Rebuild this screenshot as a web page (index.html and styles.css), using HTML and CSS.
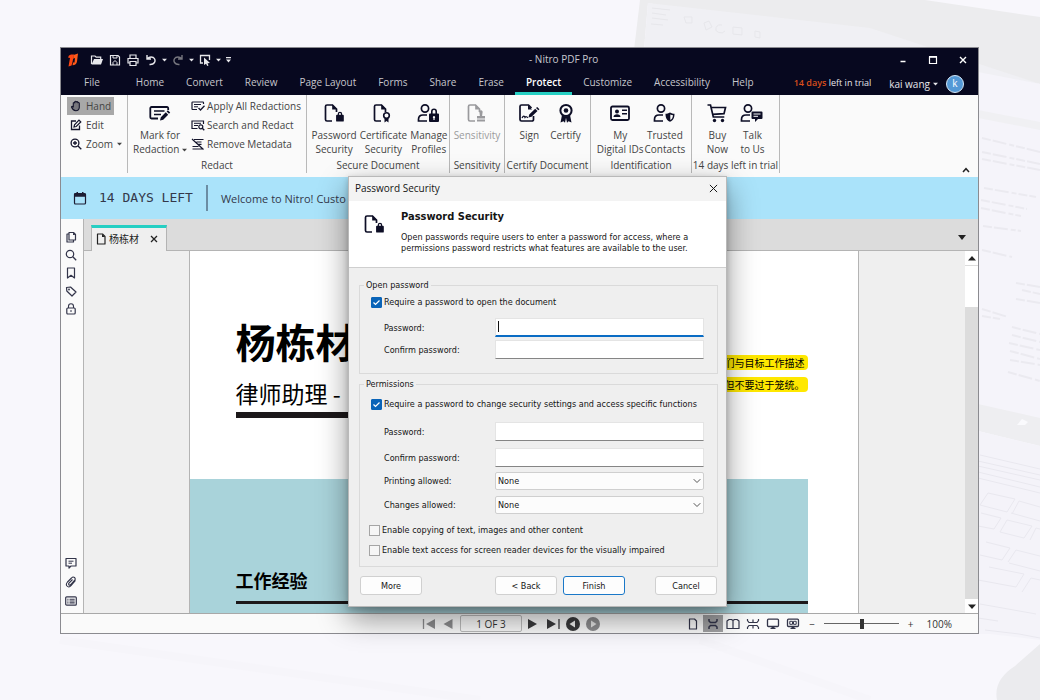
FILE: index.html
```html
<!DOCTYPE html>
<html lang="en">
<head>
<meta charset="utf-8">
<title>Nitro PDF Pro</title>
<link rel="stylesheet" href="styles.css">
</head>
<body>
<svg class="backdrop" viewBox="0 0 1040 700" preserveAspectRatio="xMaxYMid slice" aria-hidden="true">
  <path d="M640 0H925L1040 17V84L648 3L644 50H634Z" fill="#ececee"/>
  <path d="M648 3L870 28L1040 84V150L900 60L644 50Z" fill="#f0f0f4"/>
  <g fill="none" stroke="#e7e7eb"><path d="M652 8l18 2M652 13l14 2M652 18l16 2M651 24l12 1M684 17h8v6h-6zM704 23l5-2 3 6-6 3zM722 25a5 4 0 1 0 3 6M733 27l9 1v7l-9-1zM755 31l5 1v6l-5-1z"/></g>
  <path d="M978 72L1040 84V420L978 405Z" fill="#f5f4fa"/>
  <path d="M978 110L1040 122V130L978 118Z" fill="#f0f0f3"/>
  <g fill="none" stroke="#ebeaf0" stroke-width="2" stroke-dasharray="9 2 14 3 5 2"><path d="M982 138l58 14M982 152l58 12M982 159l58 11M984 188l52 9M981 200l46 9M981 208l40 8M983 226l38 5M982 250l30 7M982 309l26 8M982 316l18 3"/><path d="M1016 283l24 4M1022 290l18 4M1016 299l24 4M1012 327l28 7M1012 335l28 7M1009 343l31 7M1010 351l30 8M1010 360l30 5M1008 372l32 9"/></g>
  <path d="M978 404L1040 418V446L978 431Z" fill="#eeeef1"/>
  <path d="M1017 425l5-6 6 3-3 3z" fill="#fafafd"/>
  <path d="M978 431L1040 446V640L990 634L978 634Z" fill="#f4f3f9"/>
  <g fill="none" stroke="#e9e8ef"><path d="M980 455l60 14M978 461l62 14M978 466l62 14M978 472l62 15M978 478l62 15M980 505l8-12 27 6-8 13zM1012 514l7-13 21 6M1011 513l29 8M978 526l16 3 7-11-20-5M1000 532l7-12 25 6-8 12zM1030 540l6-12 4 1M980 555l22 5 8-12-24-6M1008 562l8-12 24 6M1009 563l31 8M978 580l38 7 8-13-35-7M1022 592l9-14 9 2M980 604l56 10M978 618l20 3M985 630l34 4 21 4"/></g>
  <path d="M997 700Q993 680 1015 666L1040 644V700Z" fill="#ebebee"/>
  <path d="M60 640L480 700M700 640L870 700" stroke="#f6f5fa" stroke-width="8"/>
</svg>

<svg class="sprite" aria-hidden="true">
  <defs>
    <g id="doc-part"><path d="M9 18H4a1.500 1.500 0 0 1-1.500-1.500v-13A1.500 1.500 0 0 1 4 2h5.500l4 4v3" fill="none" stroke="currentColor" stroke-width="1.700"/><path d="M9.200 1.500v5h5z" fill="currentColor"/></g>
    <g id="user-part" fill="none" stroke="currentColor" stroke-width="1.700"><circle cx="8" cy="5.500" r="3.600"/><path d="M10 18H1.500v-1.500c0-3 2-4.500 4.500-4.500h4"/></g>
    <symbol id="i-lockdoc" viewBox="0 0 22 20"><use href="#doc-part"/><path transform="translate(3 1.500) scale(.9)" d="M13 11.500V10.500a2.500 2.500 0 0 1 5 0v1h.8a1 1 0 0 1 1 1v5.500a1 1 0 0 1-1 1h-6.600a1 1 0 0 1-1-1V12.500a1 1 0 0 1 1-1zm1.400 0h2.200v-1a1.100 1.100 0 0 0-2.200 0z" fill="currentColor" fill-rule="evenodd"/></symbol>
    <symbol id="i-certdoc" viewBox="0 0 22 20"><use href="#doc-part"/><circle cx="14.500" cy="12.500" r="2.800" fill="none" stroke="currentColor" stroke-width="1.600"/><path d="M12.500 15h4v4.500l-2-1.500-2 1.500z" fill="currentColor"/></symbol>
    <symbol id="i-stampdoc" viewBox="0 0 22 20"><use href="#doc-part"/><path d="M13.500 9.800a1.700 1.700 0 1 1 3 0l-.4 3.200H19v2.500h-8V13h2.900zM11 16.500h8v2h-8z" fill="currentColor"/></symbol>
    <symbol id="i-sign" viewBox="0 0 22 20"><path d="M15.500 13v3.500A1.500 1.500 0 0 1 14 18H3.500A1.500 1.500 0 0 1 2 16.500v-13A1.500 1.500 0 0 1 3.500 2h7l3 3" fill="none" stroke="currentColor" stroke-width="1.700"/><path d="M10 2v4.500h4z" fill="currentColor"/><path d="M4 15c1.500-3 2.500-2 3-.5 1-1.500 2-.5 3 .3" fill="none" stroke="currentColor" stroke-width="1.200"/><path d="M10.500 14.500l.7-3 6-5.700 2.300 2.300-6 5.700zM18 5l1.200-1.100 2.300 2.300L20.300 7.300z" fill="currentColor"/></symbol>
    <symbol id="i-certify" viewBox="0 0 20 20"><circle cx="10" cy="7.500" r="5.600" fill="none" stroke="currentColor" stroke-width="2"/><circle cx="10" cy="7.500" r="2.300" fill="currentColor"/><path d="M6 12l-1.500 7.500 3-1.200 1.500 1.400 1-5 1 5 1.500-1.400 3 1.200L14 12l-4 2z" fill="currentColor"/></symbol>
    <symbol id="i-userlock" viewBox="0 0 24 20"><use href="#user-part"/><path d="M14 10.500V8.500a3 3 0 0 1 6 0v2h1a1 1 0 0 1 1 1V18a1 1 0 0 1-1 1h-8a1 1 0 0 1-1-1v-6.500a1 1 0 0 1 1-1zm1.600 0h2.800v-2a1.400 1.400 0 0 0-2.800 0zM17 13a1.200 1.200 0 0 0-.6 2.200V17h1.200v-1.800A1.200 1.200 0 0 0 17 13z" fill="currentColor" fill-rule="evenodd"/></symbol>
    <symbol id="i-usershield" viewBox="0 0 24 20"><use href="#user-part"/><path d="M17 9.500c1.500 1 3 1.300 4.500 1.300 0 4.200-1.200 6.700-4.500 8-3.300-1.300-4.500-3.800-4.500-8 1.500 0 3-.3 4.500-1.300z" fill="currentColor"/><path d="M17.300 11.500c1 .5 1.800.7 2.700.8-.2 2.300-.9 3.800-2.700 4.800z" fill="#fafafa"/></symbol>
    <symbol id="i-usertalk" viewBox="0 0 24 20"><use href="#user-part"/><path d="M12.500 8.500h9a1 1 0 0 1 1 1V15a1 1 0 0 1-1 1H18l-3 3v-3h-2.500a1 1 0 0 1-1-1V9.500a1 1 0 0 1 1-1z" fill="currentColor"/><path d="M13.500 11h7M13.500 13.300h4.500" stroke="#fafafa"/></symbol>
    <symbol id="i-idcard" viewBox="0 0 22 20"><rect x="2" y="3.500" width="18" height="13.500" rx="1.500" fill="none" stroke="currentColor" stroke-width="1.800"/><circle cx="8" cy="8.500" r="2" fill="currentColor"/><path d="M4.500 14c0-2 1.500-2.800 3.500-2.800s3.500.8 3.500 2.800zM13 6.500h5V8h-5zM13 10h5v1.500h-5z" fill="currentColor"/></symbol>
    <symbol id="i-cart" viewBox="0 0 22 20"><path d="M1.500 2h3l2.800 12h11M5.500 4.500h14L18 10.700 6.700 11.300" fill="none" stroke="currentColor" stroke-width="1.700"/><circle cx="8.500" cy="17.500" r="1.700" fill="currentColor"/><circle cx="16.500" cy="17.500" r="1.700" fill="currentColor"/></symbol>
    <symbol id="i-mark" viewBox="0 0 24 20"><path d="M10 15.500H3.500a1.200 1.200 0 0 1-1.200-1.200V5.200A1.200 1.200 0 0 1 3.500 4h15.500a1.200 1.200 0 0 1 1.200 1.200V7" fill="none" stroke="currentColor" stroke-width="1.800"/><path d="M6 8h10.500M6 11.500h7" stroke="currentColor" stroke-width="1.700"/><path d="M12 17.500l.8-3.200 5-5 2.400 2.400-5 5zM18.600 8.400l1.300-1.200 2.300 2.300L21 10.800z" fill="currentColor"/></symbol>
    <symbol id="i-apply" viewBox="0 0 14 12"><path d="M6 9.500H1.600A.7.700 0 0 1 1 8.800V2.700A.7.700 0 0 1 1.700 2h10.100a.7.700 0 0 1 .7.700V4" fill="none" stroke="currentColor" stroke-width="1.200"/><path d="M3 4.500h7M3 6.800h4" stroke="currentColor"/><path d="M7.500 8l2 2 4-4.300" fill="none" stroke="currentColor" stroke-width="1.300"/></symbol>
    <symbol id="i-searchred" viewBox="0 0 14 12"><path d="M6.500 9.500H1V2h11.500v3" fill="none" stroke="currentColor" stroke-width="1.200"/><path d="M3 4.300h7M3 6.500h4" stroke="currentColor"/><circle cx="9.800" cy="7.800" r="2" fill="none" stroke="currentColor" stroke-width="1.200"/><path d="M11.300 9.300l2 2" stroke="currentColor" stroke-width="1.300"/></symbol>
    <symbol id="i-remmeta" viewBox="0 0 14 12"><path d="M3 1.500h9.500M5.500 4h5M6.500 6.300h4M1.500 8.500h6M1.500 11h9.500M1 1l11.500 10.500" fill="none" stroke="currentColor" stroke-width="1.200"/></symbol>
    <symbol id="i-hand" viewBox="0 0 12 12"><path d="M3.300 7V3q.9-.9 1.500 0V1.700q.8-.9 1.500 0V2q.8-.7 1.500 0v.8q.8-.7 1.500.2V7.500q-.2 3-3.500 3.200Q3 10.500 1.500 7q.5-1.300 1.800 0z" fill="#77777d" stroke="currentColor" stroke-width="1.100" stroke-linejoin="round"/></symbol>
    <symbol id="i-edit" viewBox="0 0 12 12"><path d="M6 2H1.500v8.500h8V6.500" fill="none" stroke="currentColor" stroke-width="1.300"/><path d="M4 8l.5-2.200L9 1.200l1.800 1.800-4.600 4.500z" fill="none" stroke="currentColor" stroke-width="1.200"/></symbol>
    <symbol id="i-zoomin" viewBox="0 0 12 12"><circle cx="5" cy="5" r="3.900" fill="none" stroke="currentColor" stroke-width="1.300"/><path d="M8 8l3.300 3.300M3 5h4M5 3v4" stroke="currentColor" stroke-width="1.300"/></symbol>
    <symbol id="i-search" viewBox="0 0 12 12"><circle cx="5" cy="5" r="3.700" fill="none" stroke="currentColor" stroke-width="1.200"/><path d="M7.800 7.800l3.400 3.400" stroke="currentColor" stroke-width="1.300"/></symbol>
    <symbol id="i-pages" viewBox="0 0 12 12"><path d="M4 1.500h4.500l2 2V9H4zM4 3H2v8h6.500V9" fill="none" stroke="currentColor" stroke-width="1.200" stroke-linejoin="round"/><path d="M8 1.500V4h2.500z" fill="currentColor"/></symbol>
    <symbol id="i-bookmark" viewBox="0 0 12 12"><path d="M2.500 1h7v10L6 8.300 2.500 11z" fill="none" stroke="currentColor" stroke-width="1.200" stroke-linejoin="round"/></symbol>
    <symbol id="i-tag" viewBox="0 0 12 12"><path d="M1.500 2.500L5.500 2 11 7 7 11 1.800 6z" fill="none" stroke="currentColor" stroke-width="1.200" stroke-linejoin="round"/><circle cx="4" cy="4.500" r=".9" fill="currentColor"/></symbol>
    <symbol id="i-lock" viewBox="0 0 12 12"><rect x="1.800" y="5" width="8.400" height="6" rx="1" fill="none" stroke="currentColor" stroke-width="1.200"/><path d="M3.500 5V3.300a2.500 2.500 0 0 1 5 0V5M5 8h2" fill="none" stroke="currentColor" stroke-width="1.100"/></symbol>
    <symbol id="i-comment" viewBox="0 0 12 12"><path d="M1 1.500h10v7.500H6L4 11V9H1z" fill="none" stroke="currentColor" stroke-width="1.200" stroke-linejoin="round"/><path d="M3.500 4.200h5M3.500 6.200h3.500" stroke="currentColor"/></symbol>
    <symbol id="i-clip" viewBox="0 0 12 12"><path d="M10.500 4.500L6 9.700Q3.800 12 2 10 .5 8.300 2.500 6L6.500 2Q8 .3 9.500 1.500 11 3 9.500 4.500L5.500 8.800Q4.500 9.500 3.900 8.800 3.300 8 4 7.200L7.500 3.500" fill="none" stroke="currentColor" stroke-width="1.100"/></symbol>
    <symbol id="i-list" viewBox="0 0 12 12"><rect x=".7" y="1.800" width="10.600" height="8.400" rx="1" fill="none" stroke="currentColor" stroke-width="1.200"/><path d="M2.300 4.200h1.200M4.500 4.200h5.200M2.300 6h1.200M4.500 6h5.200M2.300 7.900h1.200M4.500 7.900h5.200" stroke="currentColor" stroke-width="1.100"/></symbol>
    <symbol id="i-page" viewBox="0 0 12 12"><path d="M2.500 1h5L10 3.500V11H2.500z" fill="none" stroke="currentColor" stroke-width="1.200" stroke-linejoin="round"/><path d="M7 1v3h3z" fill="currentColor"/></symbol>
    <symbol id="i-caret" viewBox="0 0 6 4"><path d="M0 .5h6L3 3.800z" fill="currentColor"/></symbol>
  </defs>
</svg>

<main class="window">
  <header class="titlebar">
    <div class="quick">
      <svg class="logo" viewBox="0 0 12 14"><path d="M1 4.500Q1.500 2 4 1.500h3L5.500 9 4.500 12.500 1.500 13.500 3 5z" fill="#ff4713"/><path d="M6.500 2L11 .5 10 8.500Q9.500 12 5.500 12.200L6 9.500h1.500L8 5l-1.800.8z" fill="#ff5a1a"/></svg>
      <button class="qbtn" aria-label="Open"><svg viewBox="0 0 14 12"><path d="M1.500 10V2h3.500l1.200 1.200h4.500V5" fill="none" stroke="currentColor" stroke-width="1.200"/><path d="M4 5H13L11 10.500H1.500z" fill="currentColor"/></svg></button>
      <button class="qbtn" aria-label="Save"><svg viewBox="0 0 14 12"><path d="M2.500 1.500h7.500l1.500 1.500v8h-9z" fill="none" stroke="currentColor" stroke-width="1.200"/><path d="M5 1.500v2.500h4V1.500M5 11V8.500l2-2 2 2V11" fill="none" stroke="currentColor"/></svg></button>
      <button class="qbtn" aria-label="Print"><svg viewBox="0 0 14 12"><path d="M4 4V1h6v3M4 9H2V4.500h10V9h-2" fill="none" stroke="currentColor" stroke-width="1.200"/><path d="M4 7.500h6v4H4z" fill="none" stroke="currentColor" stroke-width="1.200"/></svg></button>
      <button class="qbtn" aria-label="Undo"><svg viewBox="0 0 14 12"><path d="M3 1v4h4M3.200 4.800Q6 2 9.300 3.500 12 5.500 10.500 8.500 9 10.800 5.500 10.500" fill="none" stroke="currentColor" stroke-width="1.400"/></svg></button>
      <svg class="caret"><use href="#i-caret"/></svg>
      <button class="qbtn dim" aria-label="Redo"><svg viewBox="0 0 14 12"><path d="M11 1v4H7M10.800 4.800Q8 2 4.700 3.500 2 5.500 3.500 8.500 5 10.800 8.500 10.500" fill="none" stroke="currentColor" stroke-width="1.400"/></svg></button>
      <svg class="caret"><use href="#i-caret"/></svg>
      <button class="qbtn" aria-label="Select"><svg viewBox="0 0 14 12"><path d="M5 9H2.500V1.500h9V6" fill="none" stroke="currentColor" stroke-width="1.300"/><path d="M6 3.500l6 5.500-2.500.2 1 2.300-1.300.5-1.100-2.300L6 11z" fill="currentColor"/></svg></button>
      <svg class="caret"><use href="#i-caret"/></svg>
      <svg class="more" viewBox="0 0 6 7"><path d="M0 0h6v1.300H0zM0 3h6L3 6.500z" fill="currentColor"/></svg>
    </div>
    <h1 class="app-title">- Nitro PDF Pro</h1>
    <div class="wincontrols">
      <button aria-label="Minimize"><svg viewBox="0 0 10 10"><path d="M2.500 6.500h5" stroke="currentColor" stroke-width="1.500"/></svg></button>
      <button aria-label="Maximize"><svg viewBox="0 0 10 10"><path d="M1.500 2h7v6.500h-7z" fill="none" stroke="currentColor" stroke-width="1.200"/><path d="M1 1.800h8" stroke="currentColor" stroke-width="1.600"/></svg></button>
      <button aria-label="Close"><svg viewBox="0 0 10 10"><path d="M2 2l6 6M8 2l-6 6" stroke="currentColor" stroke-width="1.400"/></svg></button>
    </div>
  </header>
  <nav class="menubar">
    <a class="file" href="#">File</a><a href="#">Home</a><a href="#">Convert</a><a href="#">Review</a><a href="#">Page Layout</a><a href="#">Forms</a><a href="#">Share</a><a href="#">Erase</a><a class="current" href="#">Protect</a><a href="#">Customize</a><a href="#">Accessibility</a><a href="#">Help</a>
    <span class="trial"><b>14 days</b> left in trial</span>
    <button class="account">kai wang <svg class="caret"><use href="#i-caret"/></svg></button>
    <span class="avatar">k</span>
  </nav>

  <section class="ribbon">
    <div class="group tools">
      <button class="small active"><svg class="i12"><use href="#i-hand"/></svg>Hand</button>
      <button class="small"><svg class="i12"><use href="#i-edit"/></svg>Edit</button>
      <button class="small"><svg class="i12"><use href="#i-zoomin"/></svg>Zoom<svg class="caret"><use href="#i-caret"/></svg></button>
    </div>
    <div class="group g-redact">
      <div class="items">
        <button class="big mark"><svg class="i24"><use href="#i-mark"/></svg><span>Mark for<br>Redaction <svg class="caret"><use href="#i-caret"/></svg></span></button>
        <div class="stack">
          <button class="small"><svg class="i14"><use href="#i-apply"/></svg>Apply All Redactions</button>
          <button class="small"><svg class="i14"><use href="#i-searchred"/></svg>Search and Redact</button>
          <button class="small"><svg class="i14"><use href="#i-remmeta"/></svg>Remove Metadata</button>
        </div>
      </div>
      <span class="caption">Redact</span>
    </div>
    <div class="group g-secure">
      <div class="items">
        <button class="big"><svg class="i22"><use href="#i-lockdoc"/></svg><span>Password<br>Security</span></button>
        <button class="big"><svg class="i22"><use href="#i-certdoc"/></svg><span>Certificate<br>Security</span></button>
        <button class="big"><svg class="i24"><use href="#i-userlock"/></svg><span>Manage<br>Profiles</span></button>
      </div>
      <span class="caption">Secure Document</span>
    </div>
    <div class="group g-sens">
      <div class="items"><button class="big" disabled><svg class="i22"><use href="#i-stampdoc"/></svg><span>Sensitivity</span></button></div>
      <span class="caption">Sensitivity</span>
    </div>
    <div class="group g-cert">
      <div class="items">
        <button class="big"><svg class="i22"><use href="#i-sign"/></svg><span>Sign</span></button>
        <button class="big"><svg class="i20"><use href="#i-certify"/></svg><span>Certify</span></button>
      </div>
      <span class="caption">Certify Document</span>
    </div>
    <div class="group g-ident">
      <div class="items">
        <button class="big"><svg class="i22"><use href="#i-idcard"/></svg><span>My<br>Digital IDs</span></button>
        <button class="big"><svg class="i24"><use href="#i-usershield"/></svg><span>Trusted<br>Contacts</span></button>
      </div>
      <span class="caption">Identification</span>
    </div>
    <div class="group g-trial">
      <div class="items">
        <button class="big"><svg class="i22"><use href="#i-cart"/></svg><span>Buy<br>Now</span></button>
        <button class="big"><svg class="i24"><use href="#i-usertalk"/></svg><span>Talk<br>to Us</span></button>
      </div>
      <span class="caption">14 days left in trial</span>
    </div>
    <button class="collapse" aria-label="Collapse ribbon"><svg viewBox="0 0 8 6"><path d="M1 5l3-3.300L7 5" fill="none" stroke="currentColor" stroke-width="1.500"/></svg></button>
  </section>

  <section class="banner">
    <svg class="cal" viewBox="0 0 14 14"><rect x="1.500" y="2.500" width="11" height="10.500" rx="1" fill="none" stroke="currentColor" stroke-width="1.200"/><path d="M1.500 2.500h11v3.300h-11zM3.500 1h1.500v2H3.500zM9 1h1.500v2H9z" fill="currentColor"/></svg>
    <strong class="days">14 DAYS LEFT</strong>
    <span class="welcome">Welcome to Nitro! Custo</span>
  </section>

  <div class="workspace">
    <aside class="rail">
      <button aria-label="Pages"><svg class="i12"><use href="#i-pages"/></svg></button>
      <button aria-label="Search"><svg class="i12"><use href="#i-search"/></svg></button>
      <button aria-label="Bookmarks"><svg class="i12"><use href="#i-bookmark"/></svg></button>
      <button aria-label="Tags"><svg class="i12"><use href="#i-tag"/></svg></button>
      <button aria-label="Security"><svg class="i12"><use href="#i-lock"/></svg></button>
      <button class="push" aria-label="Comments"><svg class="i12"><use href="#i-comment"/></svg></button>
      <button aria-label="Attachments"><svg class="i12"><use href="#i-clip"/></svg></button>
      <button aria-label="Output"><svg class="i12"><use href="#i-list"/></svg></button>
    </aside>
    <div class="viewer">
      <div class="tabs">
        <div class="tab"><svg class="i12"><use href="#i-page"/></svg><span>杨栋材</span><button aria-label="Close tab"><svg viewBox="0 0 8 8"><path d="M1 1l6 6M7 1L1 7" stroke="currentColor" stroke-width="1.300"/></svg></button></div>
        <button class="tablist" aria-label="List tabs"><svg viewBox="0 0 8 5"><path d="M0 0h8L4 5z" fill="currentColor"/></svg></button>
      </div>
      <div class="canvas">
        <div class="scroller">
          <article class="page" lang="zh-CN">
            <header class="resume-head">
              <div class="who"><h2>杨栋材</h2><p>律师助理 -</p></div>
              <p class="notes"><mark>们与目标工作描述</mark><br><mark>但不要过于笼统。</mark></p>
            </header>
            <section class="resume-body"><h3>工作经验</h3></section>
          </article>
        </div>
        <div class="scrollbar">
          <button aria-label="Scroll up"><svg viewBox="0 0 8 5"><path d="M0 4.500h8L4 0z" fill="currentColor"/></svg></button>
          <div class="thumb"></div>
          <button class="down" aria-label="Scroll down"><svg viewBox="0 0 8 5"><path d="M0 .5h8L4 5z" fill="currentColor"/></svg></button>
        </div>
      </div>
    </div>
  </div>

  <footer class="status">
    <div class="pager">
      <button class="dim" aria-label="First page"><svg class="i14" viewBox="0 0 14 12"><path d="M1.500 1v10" stroke="currentColor" stroke-width="1.300"/><path d="M13 1v10L4 6z" fill="currentColor"/></svg></button>
      <button class="dim" aria-label="Previous page"><svg class="i12" viewBox="0 0 12 12"><path d="M10.500 1v10L1.500 6z" fill="currentColor"/></svg></button>
      <input class="pageno" type="text" value="1 OF 3" aria-label="Page number">
      <button aria-label="Next page"><svg class="i12" viewBox="0 0 12 12"><path d="M0 1v10l9-5z" fill="currentColor"/></svg></button>
      <button aria-label="Last page"><svg class="i14" viewBox="0 0 14 12"><path d="M13 1v10" stroke="currentColor" stroke-width="1.300"/><path d="M1 1v10l9-5z" fill="currentColor"/></svg></button>
      <button aria-label="Back"><svg class="i14" viewBox="0 0 14 14"><circle cx="7" cy="7" r="7" fill="currentColor"/><path d="M9 3.500v7L3.500 7z" fill="#f2f2f2"/></svg></button>
      <button class="dim" aria-label="Forward"><svg class="i14" viewBox="0 0 14 14"><circle cx="7" cy="7" r="7" fill="currentColor"/><path d="M5 3.500v7L10.500 7z" fill="#e4e4e4"/></svg></button>
    </div>
    <div class="views">
      <button aria-label="Single page"><svg class="i14" viewBox="0 0 14 12"><path d="M3.500 1h5l2 2v8h-7z" fill="none" stroke="currentColor" stroke-width="1.200" stroke-linejoin="round"/></svg></button>
      <button class="on" aria-label="Continuous"><svg class="i14" viewBox="0 0 14 12"><path d="M3 1v2l1.500 1.500h5L11 3V1M3 11V9l1.500-1.500h5L11 9v2" fill="none" stroke="currentColor" stroke-width="1.500"/></svg></button>
      <button aria-label="Facing"><svg class="i14" viewBox="0 0 14 12"><path d="M7 2.500L5.500 1.500H3L1 3v7.500h12V3l-2-1.500H8.500zM7 2.500v8" fill="none" stroke="currentColor" stroke-width="1.200" stroke-linejoin="round"/></svg></button>
      <button aria-label="Facing continuous"><svg class="i14" viewBox="0 0 14 12"><path d="M1.500 1v1.500l1.500 2h8l1.500-2V1M1.500 11V9.500l1.500-2h8l1.500 2V11M7 1.500v3M7 7.500v3" fill="none" stroke="currentColor" stroke-width="1.200"/></svg></button>
      <button aria-label="Full screen"><svg class="i14" viewBox="0 0 14 12"><rect x="1.500" y="1.200" width="11" height="7.300" rx="1" fill="none" stroke="currentColor" stroke-width="1.300"/><path d="M5.500 8.500h3V10h1v1h-5v-1h1z" fill="currentColor"/></svg></button>
      <button aria-label="Reading mode"><svg class="i14" viewBox="0 0 14 12"><rect x="1.500" y="1.200" width="11" height="7.300" rx="1" fill="none" stroke="currentColor" stroke-width="1.300"/><path d="M3.800 3.300h2.700v3H3.800zM7.500 3.300h2.700v3H7.500z" fill="none" stroke="currentColor"/><path d="M5.500 8.500h3V10h1v1h-5v-1h1z" fill="currentColor"/></svg></button>
    </div>
    <div class="zoom">
      <button aria-label="Zoom out">−</button>
      <input type="range" min="0" max="100" value="51" aria-label="Zoom">
      <button aria-label="Zoom in">+</button>
      <output>100%</output>
    </div>
  </footer>

  <form class="dialog" role="dialog" aria-label="Password Security">
    <div class="dlg-title"><span>Password Security</span><button type="button" aria-label="Close dialog"><svg viewBox="0 0 10 10"><path d="M1 1l8 8M9 1L1 9" stroke="currentColor" stroke-width="1.100"/></svg></button></div>
    <div class="dlg-head">
      <svg class="i22"><use href="#i-lockdoc"/></svg>
      <div><h2>Password Security</h2><p>Open passwords require users to enter a password for access, where a permissions password restricts what features are available to the user.</p></div>
    </div>
    <div class="dlg-body">
      <fieldset>
        <legend>Open password</legend>
        <label class="check"><input type="checkbox" checked>Require a password to open the document</label>
        <div class="field tight"><label for="p1">Password:</label><div class="focusbox"><input id="p1" type="text"></div></div>
        <div class="field snug"><label for="p2">Confirm password:</label><input id="p2" type="text"></div>
      </fieldset>
      <fieldset class="perms">
        <legend>Permissions</legend>
        <label class="check"><input type="checkbox" checked>Require a password to change security settings and access specific functions</label>
        <div class="field"><label for="p3">Password:</label><input id="p3" type="text"></div>
        <div class="field"><label for="p4">Confirm password:</label><input id="p4" type="text"></div>
        <div class="field tight"><label for="s1">Printing allowed:</label><div class="select"><select id="s1"><option>None</option></select><svg viewBox="0 0 8 6"><path d="M.7 1.200L4 4.500l3.300-3.300" fill="none" stroke="currentColor"/></svg></div></div>
        <div class="field tight"><label for="s2">Changes allowed:</label><div class="select"><select id="s2"><option>None</option></select><svg viewBox="0 0 8 6"><path d="M.7 1.200L4 4.500l3.300-3.300" fill="none" stroke="currentColor"/></svg></div></div>
        <div class="options">
          <label class="check"><input type="checkbox">Enable copying of text, images and other content</label>
          <label class="check"><input type="checkbox">Enable text access for screen reader devices for the visually impaired</label>
        </div>
      </fieldset>
      <div class="actions">
        <button type="button">More</button>
        <button type="button" class="back">&lt; Back</button>
        <button type="button" class="primary">Finish</button>
        <button type="button" class="cancel">Cancel</button>
      </div>
    </div>
  </form>
</main>
</body>
</html>
```

FILE: styles.css
```css
* { box-sizing: border-box; }
body {
  margin: 0;
  min-height: 100vh;
  padding: 47px 61px 66px 60px;
  display: flex;
  background: #f8f7fc;
  font-family: "Open Sans", "Noto Sans CJK SC", sans-serif;
  font-size: 10px;
  color: #444;
}
button {
  border: 0;
  padding: 0;
  background: none;
  font: inherit;
  color: inherit;
}
h1, h2, h3, p { margin: 0; }
svg { display: block; flex: none; }
.backdrop { position: fixed; inset: 0; width: 100%; height: 100%; z-index: -1; }
.sprite { position: absolute; width: 0; height: 0; }
.i12 { width: 12px; height: 12px; }
.i14 { width: 14px; height: 12px; }
.i20 { width: 20px; height: 20px; }
.i22 { width: 22px; height: 20px; }
.i24 { width: 24px; height: 20px; }
.caret { width: 5px; height: 4px; }

.window {
  position: relative;
  flex: 1;
  min-width: 0;
  display: flex;
  flex-direction: column;
  border: 1px solid #8b8b90;
  background: #fafafa;
}

/* Title bar */
.titlebar {
  display: grid;
  grid-template-columns: 5fr auto 4fr;
  align-items: center;
  height: 24px;
  padding: 0 10px 0 6px;
  background: #07081f;
  color: #e8e8ec;
}
.quick { display: flex; align-items: center; gap: 4px; }
.logo { width: 12px; height: 14px; margin-right: 7px; }
.qbtn svg { width: 14px; height: 12px; }
.qbtn.dim { color: #77777f; }
.more { width: 5px; height: 6px; margin-left: 1px; }
.app-title { font-size: 10px; line-height: 20px; padding-bottom: 2px; font-weight: 400; color: #c9c9cf; }
.wincontrols { display: flex; justify-content: flex-end; gap: 20px; color: #fff; }
.wincontrols svg { width: 10px; height: 10px; }

/* Menu tabs */
.menubar {
  display: flex;
  align-items: stretch;
  height: 23px;
  padding-right: 14px;
  background: #07081f;
  white-space: nowrap;
}
.menubar a {
  padding: 0 11px;
  line-height: 21px;
  color: #c6c6cc;
  text-decoration: none;
}
.menubar .file { padding: 0 25px 0 23px; }
.menubar .current { color: #fff; font-weight: 600; border-bottom: 3px solid #26cfc3; }
.trial { margin-left: auto; font-size: 9px; line-height: 22px; color: #e6e6ea; }
.trial b { font-weight: 600; color: #d84e1c; }
.account { display: flex; align-items: center; gap: 3px; margin: 0 8px 0 18px; color: #e6e6ea; }
.avatar {
  width: 18px;
  height: 18px;
  margin-top: 3px;
  border: 1px solid #d5e6f5;
  border-radius: 50%;
  background: #5499d6;
  color: #fff;
  line-height: 15px;
  text-align: center;
}

/* Ribbon */
.ribbon { display: flex; align-items: flex-start; height: 82px; background: #fafafa; }
.group {
  display: flex;
  flex-direction: column;
  height: 78px;
  border-right: 1px solid #b9b9b9;
  line-height: 14px;
}
.items { display: flex; justify-content: center; flex: 1; padding-top: 8px; }
.caption { text-align: center; height: 15px; white-space: nowrap; }
.tools { width: 67px; padding: 2px 0 0 6px; align-items: flex-start; }
.g-redact { width: 179px; }
.g-secure { width: 143px; }
.g-sens { width: 55px; }
.g-cert { width: 86px; }
.g-ident { width: 101px; }
.g-trial { width: 88px; }
.g-secure .items { gap: 3px; padding-left: 3px; }
.g-cert .items { gap: 10px; padding-left: 4px; }
.g-ident .items { gap: 1px; }
.g-trial .items { gap: 12px; }
.small { display: flex; align-items: center; gap: 4px; height: 18px; padding: 0 3px; white-space: nowrap; }
.small svg:first-child { color: #14152c; }
.tools .small { min-width: 46px; }
.small.active { background: #a8a8a8; }
.stack { display: flex; flex-direction: column; margin-top: -6px; }
.stack .small { gap: 2px; padding: 0; }
.tools .small + .small, .stack .small + .small { height: 19px; }
.big { display: flex; flex-direction: column; align-items: center; justify-content: flex-start; white-space: nowrap; gap: 5px; }
.big > svg { color: #0d0e26; }
.big:disabled, .big:disabled > svg { color: #9a9a9d; }
.big .caret { display: inline-block; vertical-align: middle; }
.mark { margin-right: 4px; }
.caret { color: inherit; }
.collapse { margin: 72px 8px 0 auto; color: #222; }
.collapse svg { width: 8px; height: 6px; }

/* Trial banner */
.banner { display: flex; align-items: center; height: 42px; background: #aae3fa; color: #33384a; }
.cal { width: 14px; height: 14px; margin: 0 12px; color: #1c1d33; }
.days {
  font: 13px "DejaVu Sans Mono", monospace;
  padding-right: 13px;
  border-right: 2px solid #6b8da3;
  line-height: 26px;
}
.welcome { padding-left: 13px; font-size: 11px; }

/* Workspace */
.workspace { flex: 1; display: flex; min-height: 0; }
.rail {
  display: flex;
  flex-direction: column;
  align-items: center;
  width: 22px;
  padding: 9px 2px 3px 0;
  color: #33354a;
}
.rail button { display: flex; align-items: center; height: 18px; }
.rail .push { margin-top: auto; }
.rail .push ~ button { margin-top: 1px; }
.viewer { flex: 1; display: flex; flex-direction: column; min-width: 0; border-left: 1px solid #b4b4b4; }
.tabs {
  display: flex;
  align-items: flex-end;
  height: 32px;
  padding-left: 7px;
  border-bottom: 1px solid #b4b4b4;
  background: #dcdcdc;
}
.tab {
  display: flex;
  align-items: center;
  gap: 2px;
  width: 76px;
  height: 26px;
  margin-bottom: -1px;
  padding: 0 8px 2px 3px;
  border: 1px solid #b4b4b4;
  border-top: 3px solid #26cfc3;
  border-bottom: 0;
  background: #efefef;
  color: #222;
}
.tab span { white-space: nowrap; }
.tab button { margin-left: auto; }
.tab button svg { width: 8px; height: 8px; }
.tablist { margin: 0 12px 10px auto; color: #222; }
.tablist svg { width: 8px; height: 5px; }
.canvas { flex: 1; display: flex; min-height: 0; background: #efefef; }
.scroller { flex: 1; display: flex; justify-content: center; overflow: hidden; padding-right: 2px; }
.page {
  flex: 1;
  max-width: 670px;
  display: flex;
  flex-direction: column;
  border: 1px solid #b4b4b4;
  border-width: 0 1px;
  background: #fff;
  color: #000;
  font-family: "Noto Sans CJK SC", sans-serif;
}
.resume-head { display: flex; justify-content: space-between; padding: 66px 50px 61px 46px; }
.who { width: 300px; border-bottom: 6px solid #1c181a; }
.who h2 { font-size: 40px; line-height: 48px; font-weight: 700; }
.who p { margin-top: 10px; font-size: 23px; line-height: 36px; padding-bottom: 1px; }
.notes { margin-top: 35px; text-align: right; line-height: 22px; }
.notes mark { padding: 0 3px; border-radius: 4px; background: #ffe800; }
.resume-body { flex: 1; margin-right: 50px; padding: 85px 0 0 46px; background: #a9d3da; }
.resume-body h3 { font-size: 18px; line-height: 32px; padding-bottom: 5px; border-bottom: 3px solid #1c181a; }
.scrollbar { display: flex; flex-direction: column; width: 13px; background: #dcdcdc; color: #222; }
.scrollbar button { display: flex; align-items: center; justify-content: center; height: 14px; background: #fff; }
.scrollbar svg { width: 8px; height: 5px; }
.scrollbar .down { margin-top: auto; }
.thumb { height: 41px; margin-top: 1px; background: #fff; }

/* Status bar */
.status {
  display: flex;
  align-items: center;
  height: 20px;
  padding: 0 26px 0 361px;
  border-top: 1px solid #a8a8a8;
}
.pager { display: flex; align-items: center; gap: 6px; color: #3a3a3c; }
.pager .dim { color: #8d8d8f; }
.pager svg[viewBox="0 0 14 14"] { height: 14px; }
.pageno {
  width: 62px;
  height: 17px;
  padding: 0;
  border: 1px solid #bcbcbc;
  border-radius: 2px;
  background: transparent;
  font: inherit;
  color: #333;
  text-align: center;
}
.views { display: flex; margin-left: auto; color: #33354a; }
.views button { display: flex; align-items: center; justify-content: center; width: 20px; height: 17px; }
.views .on { background: #a0a0a2; }
.zoom { display: flex; align-items: center; gap: 9px; margin-left: 6px; color: #333; }
.zoom input { appearance: none; width: 75px; height: 12px; margin: 0; background: linear-gradient(#666, #666) center / 100% 1px no-repeat; }
.zoom input::-webkit-slider-thumb { appearance: none; width: 4px; height: 10px; background: #333; }
.zoom output { margin-left: 4px; }

/* Dialog */
.dialog {
  position: absolute;
  left: 287px;
  top: 128px;
  width: 379px;
  border: 1px solid #b9b9b9;
  background: #efefef;
  box-shadow: 0 12px 28px rgba(0, 0, 0, 0.42), 0 2px 6px rgba(0, 0, 0, 0.2);
  color: #151515;
  font-family: "DejaVu Sans Condensed", "DejaVu Sans", sans-serif;
  font-size: 9px;
}
.dlg-title {
  display: flex;
  align-items: center;
  justify-content: space-between;
  height: 24px;
  padding: 0 8px 2px 6px;
  background: #f3f3f3;
  font-family: "Open Sans", sans-serif;
  font-size: 10px;
}
.dlg-title svg { width: 9px; height: 9px; }
.dlg-head {
  display: flex;
  gap: 16px;
  height: 67px;
  padding: 8px 20px 0 14px;
  border-bottom: 1px solid #cfcfcf;
  background: #fff;
}
.dlg-head svg { margin-top: 5px; color: #0d0e26; }
.dlg-head h2 { font-size: 11px; line-height: 16px; }
.dlg-head p { margin-top: 7px; line-height: 11px; }
.dlg-body { padding: 10px 8px 11px 10px; }
fieldset { min-width: 0; margin: 0; padding: 0 13px 15px 10px; border: 1px solid #dadada; }
legend { margin-left: -6px; padding: 0 2px; line-height: 14px; }
.perms { margin-top: 3px; padding-bottom: 6px; }
.check { display: flex; align-items: center; gap: 2px; height: 20px; white-space: nowrap; }
fieldset > .check { margin-left: 1px; }
.perms > .check { margin-top: 3px; }
.check input {
  appearance: none;
  flex: none;
  width: 11px;
  height: 11px;
  margin: 0;
  border: 1px solid #a5a5a5;
  background: #f6f6f6;
}
.check input:checked {
  border-color: #0a64b8;
  border-radius: 1px;
  background: #0a64b8 url("data:image/svg+xml,%3Csvg xmlns='http://www.w3.org/2000/svg' viewBox='0 0 9 9'%3E%3Cpath d='M1.500 4.500l2 2 4-4' fill='none' stroke='white' stroke-width='1.200'/%3E%3C/svg%3E");
}
.field { display: grid; grid-template-columns: 111px 1fr; align-items: center; height: 18px; margin: 8px 0 0 14px; }
.field.tight { margin-top: 6px; }
.field.snug { margin-top: 4px; }
.field input {
  width: 100%;
  height: 19px;
  padding: 0 2px;
  border: 1px solid #e4e4e4;
  border-bottom-color: #858585;
  background: #fff;
  font: inherit;
}
.focusbox { position: relative; }
.focusbox::after { content: ""; position: absolute; left: 3px; top: 3px; width: 1px; height: 11px; background: #111; }
.focusbox input { display: block; border-bottom: 2px solid #0a6cc4; }
.select { position: relative; }
.select select {
  display: block;
  appearance: none;
  width: 100%;
  height: 18px;
  padding: 0 2px;
  border: 1px solid #cfcfcf;
  border-radius: 2px;
  background: #fcfcfc;
  font: inherit;
  color: inherit;
}
.select svg { position: absolute; right: 3px; top: 6px; width: 8px; height: 6px; color: #555; }
.options { margin: 6px 0 0 -1px; }
.actions { display: flex; margin-top: 9px; padding: 0 1px; }
.actions button {
  width: 62px;
  height: 19px;
  border: 1px solid #d0d0d0;
  border-radius: 3px;
  background: #fdfdfd;
}
.actions .back { margin-left: auto; margin-right: 6px; }
.actions .primary { border-color: #1a78c8; }
.actions .cancel { margin-left: 30px; }
```
